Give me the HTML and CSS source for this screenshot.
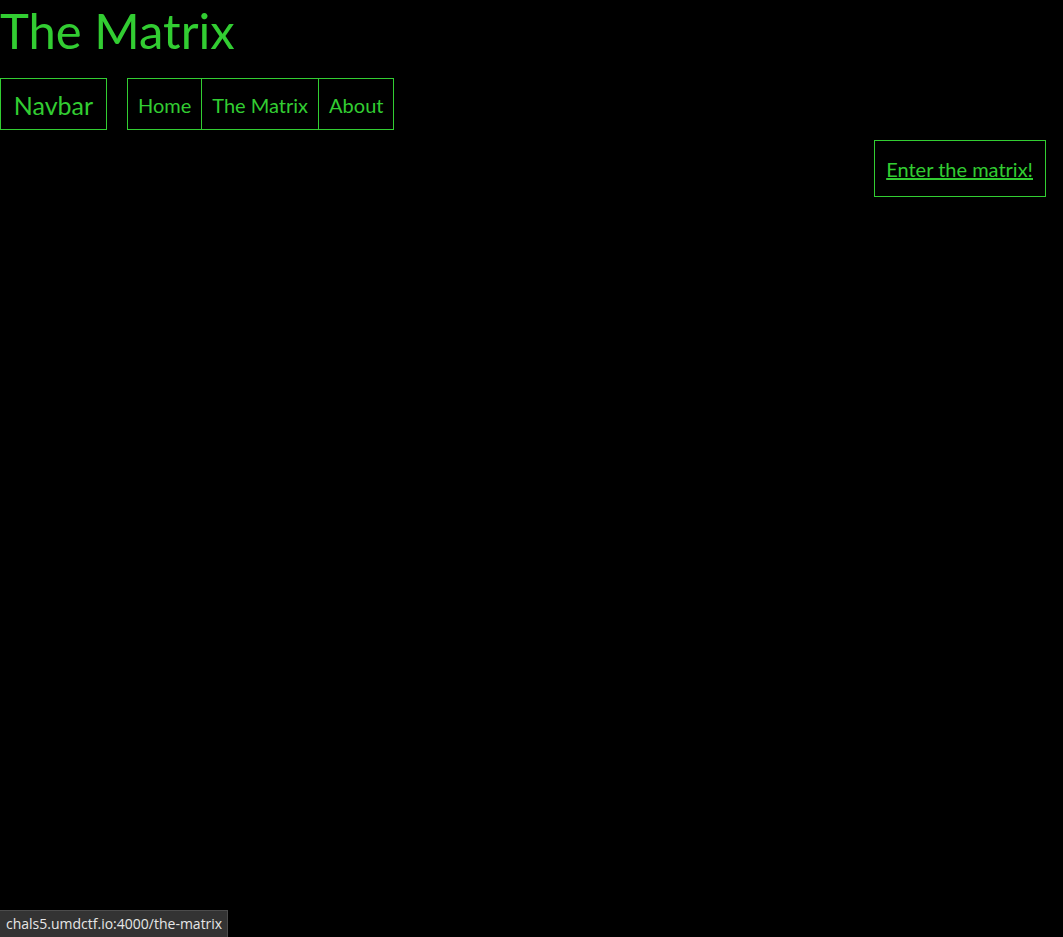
FILE: index.html
```html
<!DOCTYPE html>
<html>
<head>
<meta charset="utf-8">
<title>The Matrix</title>
<link rel="stylesheet" href="styles.css">
</head>
<body>
<h1 class="title">The Matrix</h1>
<nav class="navbar">
  <div class="brand">Navbar</div>
  <ul class="links">
    <li><a href="#">Home</a></li>
    <li><a href="#">The Matrix</a></li>
    <li><a href="#">About</a></li>
  </ul>
</nav>
<div class="cta-row">
  <div class="cta"><a href="#">Enter the matrix!</a></div>
</div>
<div class="status">chals5.umdctf.io:4000/the-matrix</div>
</body>
</html>
```
FILE: styles.css
```css
html, body {
  margin: 0;
  padding: 0;
  background: #000;
  height: 100%;
}
body {
  font-family: "Lato", "Open Sans", sans-serif;
  color: #32cd32;
}
.title {
  margin: 0;
  height: 78px;
  font-weight: 400;
  font-size: 49px;
  line-height: 60px;
}
.navbar {
  display: flex;
  gap: 20px;
  height: 52px;
}
.brand {
  border: 1px solid #32cd32;
  display: flex;
  align-items: center;
  justify-content: center;
  font-size: 25px;
  box-sizing: border-box;
  width: 107px;
  padding-top: 2px;
}
.links {
  display: flex;
  margin: 0;
  padding: 0;
  list-style: none;
  border: 1px solid #32cd32;
}
.links li {
  display: flex;
  align-items: center;
  border-left: 1px solid #32cd32;
  padding-top: 2px;
}
.links li:first-child { border-left: none; }
.links a {
  color: #32cd32;
  text-decoration: none;
  font-size: 20px;
  padding: 0 10px;
}
.cta-row {
  display: flex;
  justify-content: flex-end;
  padding: 10px 17px 0 0;
}
.cta {
  border: 1px solid #32cd32;
  height: 57px;
  box-sizing: border-box;
  display: flex;
  align-items: center;
  padding: 0 12px 0 11px;
}
.cta a {
  color: #32cd32;
  font-size: 20px;
}
.status {
  position: fixed;
  left: 0;
  bottom: 0;
  background: #333;
  border: 1px solid #4c4c4c;
  border-left: none;
  border-bottom: none;
  color: #e6e6e6;
  font-size: 14px;
  line-height: 18px;
  padding: 4px 5px 4px 6px;
  font-family: "Open Sans", sans-serif;
}
```
